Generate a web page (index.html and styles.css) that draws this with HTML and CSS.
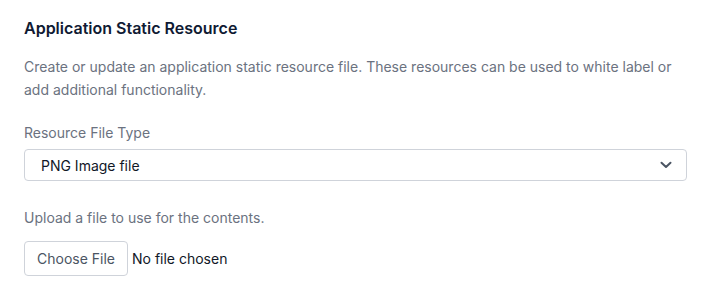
FILE: index.html
```html
<!DOCTYPE html>
<html lang="en">
<head>
<meta charset="utf-8">
<title>Application Static Resource</title>
<link rel="stylesheet" href="styles.css">
</head>
<body>
<div class="page">
  <h2 class="title">Application Static Resource</h2>
  <p class="desc">Create or update an application static resource file. These resources can be used to white label or add additional functionality.</p>
  <label class="label" for="ftype">Resource File Type</label>
  <div class="select-wrap">
    <select class="select" id="ftype">
      <option>PNG Image file</option>
    </select>
    <svg class="chev" width="12" height="8" viewBox="0 0 12 8" aria-hidden="true"><path d="M1.5 1.75 L6 6 L10.5 1.75" fill="none" stroke="#4b5563" stroke-width="2" stroke-linecap="round" stroke-linejoin="round"/></svg>
  </div>
  <p class="hint">Upload a file to use for the contents.</p>
  <label class="file">
    <input class="file-input" type="file">
    <span class="file-btn">Choose File</span>
    <span class="file-name">No file chosen</span>
  </label>
</div>
</body>
</html>
```

FILE: styles.css
```css
html, body {
  margin: 0;
  padding: 0;
  background: #ffffff;
}
body {
  font-family: Inter, "Noto Sans", sans-serif;
  font-size: 14px;
  color: #111827;
}
.page {
  padding: 16px 28px 0 24px;
  display: flex;
  flex-direction: column;
}
.title {
  margin: 0;
  font-size: 16px;
  line-height: 24px;
  font-weight: 600;
  color: #0f1a33;
}
.desc {
  margin: 16px 0 0;
  font-size: 14px;
  line-height: 22.5px;
  color: #6b7280;
}
.label {
  margin-top: 22px;
  font-size: 14px;
  line-height: 20px;
  color: #6b7280;
}
.select-wrap {
  position: relative;
  margin-top: 6px;
}
.select {
  appearance: none;
  -webkit-appearance: none;
  display: block;
  width: 100%;
  height: 32px;
  margin: 0;
  padding: 0 40px 0 16px;
  border: 1px solid #cfd3da;
  border-radius: 4px;
  background: #ffffff;
  font-family: Inter, "Noto Sans", sans-serif;
  font-size: 14px;
  color: #111827;
  outline: none;
}
.chev {
  position: absolute;
  right: 15px;
  top: 12px;
  pointer-events: none;
}
.hint {
  margin: 27px 0 0;
  font-size: 14px;
  line-height: 20px;
  color: #6b7280;
}
.file {
  margin-top: 13px;
  display: flex;
  align-items: center;
  gap: 4px;
  cursor: pointer;
}
.file-input {
  display: none;
}
.file-btn {
  box-sizing: border-box;
  height: 35px;
  width: 104px;
  display: flex;
  align-items: center;
  justify-content: center;
  border: 1px solid #cfd3da;
  border-radius: 4px;
  background: #ffffff;
  color: #4b5563;
  font-size: 14px;
}
.file-name {
  color: #111827;
  font-size: 14px;
}
```
